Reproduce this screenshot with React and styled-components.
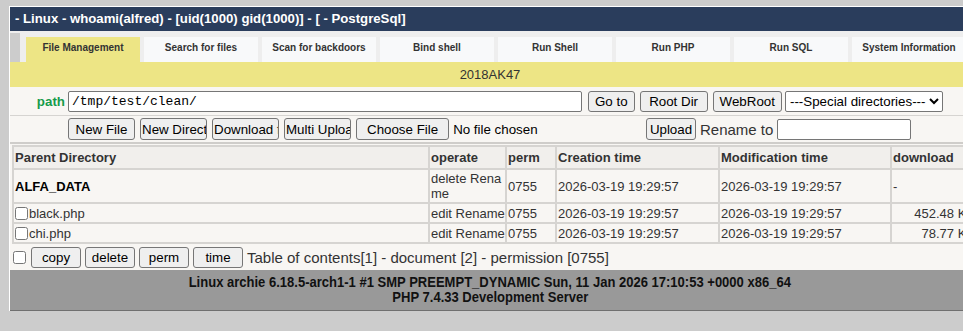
import React from "react";
import styled, { createGlobalStyle } from "styled-components";

const GlobalStyle = createGlobalStyle`
  html, body {
    margin: 0;
    background: #ccc;
    overflow-x: hidden;
  }
  body {
    padding: 6px 0 0 9px;
    font-family: "Liberation Sans", Arial, sans-serif;
    font-size: 13px;
    color: #000;
  }
`;

const Shell = styled.div`
  width: 960px;
  border-top: 1px solid #fff;
  border-left: 1px solid #fff;
  background: #f8f6f3;
`;

const TitleBar = styled.div`
  height: 24px;
  line-height: 24px;
  padding-left: 5px;
  background: #2a3d5c;
  color: #fff;
  font-weight: bold;
  font-size: 13.2px;
  white-space: nowrap;
`;

const NavWrap = styled.div`
  background: #eee;
  padding-top: 2px;
`;

const NavList = styled.ul`
  display: flex;
  gap: 4px;
  margin: 0;
  padding: 4px 0 0 6px;
  list-style: none;
  border-left: 10px solid #ccc;
`;

const Tab = styled.li`
  flex: 0 0 114px;
  height: 25px;
  line-height: 22px;
  text-align: center;
  font-size: 10px;
  font-weight: bold;
  color: #333;
  background: ${(p) => (p.active ? "#ede585" : "#f8f9fa")};
  white-space: nowrap;
`;

const Banner = styled.div`
  height: 25px;
  line-height: 25px;
  text-align: center;
  background: #ede585;
  color: #333;
  font-size: 13px;
`;

const FormRow = styled.div`
  display: flex;
  align-items: center;
  height: ${(p) => p.h}px;
  border-bottom: ${(p) => p.line};
`;

const LabelCell = styled.div`
  flex: 0 0 55px;
  text-align: right;
  padding-right: 3px;
  color: #169b4b;
  font-weight: bold;
  font-size: 13.33px;
`;

const Controls = styled.div`
  display: flex;
  align-items: center;
  gap: ${(p) => p.gap || 5}px;
`;

const PathInput = styled.input`
  box-sizing: border-box;
  width: 514px;
  height: 21px;
  padding: 1px 3px;
  border: 1px solid #767676;
  border-radius: 2px;
  background: #fff;
  font-family: "Liberation Mono", "Courier New", monospace;
  font-size: 13px;
  color: #000;
`;

const Btn = styled.button`
  box-sizing: border-box;
  height: ${(p) => p.h || 21}px;
  ${(p) => (p.w ? `width: ${p.w}px;` : "")}
  padding: 1px ${(p) => (p.w ? 1 : 6)}px;
  border: 1px solid #767676;
  border-radius: 3px;
  background: #efefef;
  font-family: "Liberation Sans", Arial, sans-serif;
  font-size: 13.33px;
  color: #000;
  white-space: nowrap;
  overflow: hidden;
  text-align: ${(p) => (p.left ? "left" : "center")};
`;

const Select = styled.select`
  width: 158px;
  height: 21px;
  margin-left: -2px;
  border: 1px solid #767676;
  border-radius: 2px;
  background: #fff;
  font-family: "Liberation Sans", Arial, sans-serif;
  font-size: 13.33px;
  color: #000;
`;

const FileInput = styled.input`
  width: 286px;
  font-family: "Liberation Sans", Arial, sans-serif;
  font-size: 13.33px;
  color: #000;
  &::file-selector-button {
    height: 22px;
    padding: 1px 10px;
    margin-right: 4px;
    border: 1px solid #767676;
    border-radius: 3px;
    background: #efefef;
    font-family: "Liberation Sans", Arial, sans-serif;
    font-size: 13.33px;
  }
`;

const PlainText = styled.span`
  font-size: 15px;
  color: #333;
  white-space: nowrap;
  margin-left: ${(p) => p.shift || 0}px;
`;

const TextInput = styled.input`
  box-sizing: border-box;
  width: 134px;
  height: 21px;
  margin-left: -1px;
  border: 1px solid #767676;
  border-radius: 2px;
  background: #fff;
`;

const Table = styled.table`
  width: 966px;
  margin: 1px 0 0 2px;
  border-collapse: collapse;
  table-layout: fixed;
  font-size: 13px;
  color: #333;
`;

const Th = styled.th`
  padding: 3px 1px;
  line-height: 15px;
  text-align: left;
  font-weight: bold;
  background: #f1efec;
  border: 2px solid #d6d4d1;
  color: #333;
  white-space: nowrap;
`;

const Td = styled.td`
  padding: ${(p) => (p.tall ? "1px 1px" : "2px 1px 1px")};
  border: 2px solid #d6d4d1;
  text-align: ${(p) => (p.right ? "right" : "left")};
  font-weight: ${(p) => (p.bold ? "bold" : "normal")};
  color: ${(p) => (p.bold ? "#000" : "#333")};
  line-height: 15px;
  white-space: ${(p) => (p.wrap ? "normal" : "nowrap")};
  word-break: ${(p) => (p.wrap ? "break-all" : "normal")};
  overflow: hidden;
`;

const Check = styled.input`
  width: 13px;
  height: 13px;
  margin: 0 1px 0 0;
  vertical-align: -2px;
`;

const ActionRow = styled.div`
  display: flex;
  align-items: center;
  gap: 4px;
  height: 26px;
  padding-left: 3px;
`;

const Footer = styled.div`
  padding: 5px 0 5px;
  background: #999;
  border-bottom: 1px solid #6f6f6f;
  text-align: center;
  font-family: "Liberation Sans", Arial, sans-serif;
  font-weight: bold;
  font-size: 14px;
  line-height: 15px;
  color: #111;
`;

const FooterLine = styled.span`
  display: inline-block;
  transform: scaleX(0.93);
  white-space: nowrap;
`;

const tabs = [
  "File Management",
  "Search for files",
  "Scan for backdoors",
  "Bind shell",
  "Run Shell",
  "Run PHP",
  "Run SQL",
  "System Information",
];

const files = [
  { name: "black.php", size: "452.48 KB" },
  { name: "chi.php", size: "78.77 KB" },
];

const stamp = "2026-03-19 19:29:57";

export default function App() {
  return (
    <>
      <GlobalStyle />
      <Shell>
        <TitleBar>- Linux - whoami(alfred) - [uid(1000) gid(1000)] - [ - PostgreSql]</TitleBar>
        <NavWrap>
          <NavList>
            {tabs.map((t, i) => (
              <Tab key={t} active={i === 0}>
                {t}
              </Tab>
            ))}
          </NavList>
        </NavWrap>
        <Banner>2018AK47</Banner>

        <FormRow h={28} line="1px solid #d6d4d1">
          <LabelCell>path</LabelCell>
          <Controls gap={5}>
            <PathInput defaultValue="/tmp/test/clean/" />
            <Btn style={{ marginLeft: 1 }}>Go to</Btn>
            <Btn w={68}>Root Dir</Btn>
            <Btn>WebRoot</Btn>
            <Select>
              <option>---Special directories---</option>
            </Select>
          </Controls>
        </FormRow>

        <FormRow h={26} line="2px solid #cfcdca">
          <LabelCell />
          <Controls gap={5}>
            <Btn w={67} h={22}>New File</Btn>
            <Btn w={67} h={22} left>New Directory</Btn>
            <Btn w={67} h={22} left>Download files</Btn>
            <Btn w={67} h={22} left>Multi Upload</Btn>
            <FileInput type="file" />
            <Btn w={50} h={22} style={{ marginLeft: -1 }}>Upload</Btn>
            <PlainText shift={-1}>Rename to</PlainText>
            <TextInput />
          </Controls>
        </FormRow>

        <Table>
          <colgroup>
            <col />
            <col style={{ width: 77 }} />
            <col style={{ width: 50 }} />
            <col style={{ width: 163 }} />
            <col style={{ width: 172 }} />
            <col style={{ width: 86 }} />
          </colgroup>
          <thead>
            <tr>
              <Th>Parent Directory</Th>
              <Th>operate</Th>
              <Th>perm</Th>
              <Th>Creation time</Th>
              <Th>Modification time</Th>
              <Th>download</Th>
            </tr>
          </thead>
          <tbody>
            <tr>
              <Td bold tall>ALFA_DATA</Td>
              <Td wrap tall>delete Rename</Td>
              <Td tall>0755</Td>
              <Td tall>{stamp}</Td>
              <Td tall>{stamp}</Td>
              <Td tall>-</Td>
            </tr>
            {files.map((f) => (
              <tr key={f.name}>
                <Td>
                  <Check type="checkbox" />
                  {f.name}
                </Td>
                <Td>edit Rename</Td>
                <Td>0755</Td>
                <Td>{stamp}</Td>
                <Td>{stamp}</Td>
                <Td right>{f.size}</Td>
              </tr>
            ))}
          </tbody>
        </Table>

        <ActionRow>
          <Check type="checkbox" />
          <Btn w={50}>copy</Btn>
          <Btn w={50}>delete</Btn>
          <Btn w={50}>perm</Btn>
          <Btn w={50}>time</Btn>
          <PlainText>Table of contents[1] - document [2] - permission [0755]</PlainText>
        </ActionRow>

        <Footer>
          <FooterLine>
            Linux archie 6.18.5-arch1-1 #1 SMP PREEMPT_DYNAMIC Sun, 11 Jan 2026 17:10:53 +0000 x86_64
          </FooterLine>
          <br />
          <FooterLine>PHP 7.4.33 Development Server</FooterLine>
        </Footer>
      </Shell>
    </>
  );
}
